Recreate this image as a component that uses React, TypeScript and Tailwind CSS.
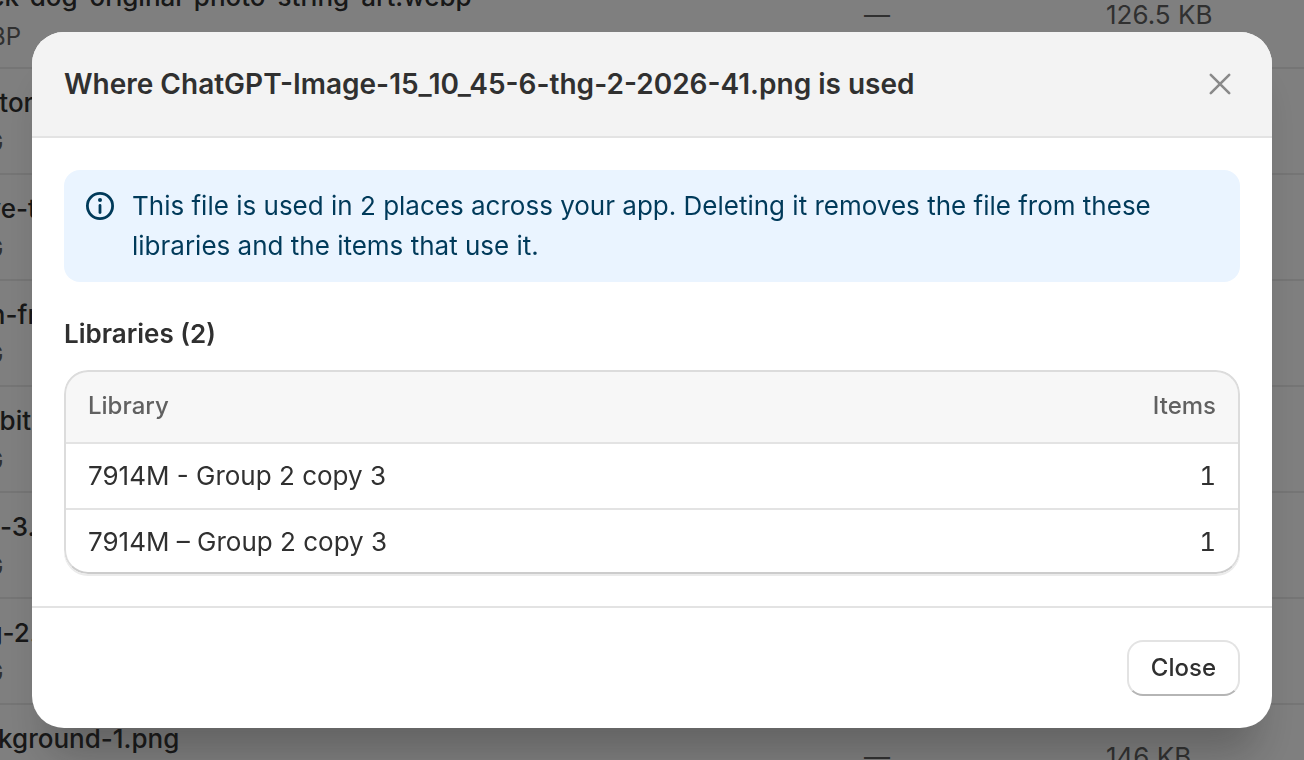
import type { ReactNode } from "react";

type FileRow = {
  name: string;
  type: string;
  size: string;
};

type Library = {
  name: string;
  items: number;
};

const files: FileRow[] = [
  { name: "black-dog-original-photo-string-art.webp", type: "WEBP", size: "126.5 KB" },
  { name: "Vector.png", type: "PNG", size: "98.2 KB" },
  { name: "Cove-template.png", type: "PNG", size: "112 KB" },
  { name: "man-front.png", type: "PNG", size: "87.4 KB" },
  { name: "Rabbit.png", type: "PNG", size: "204 KB" },
  { name: "dog-3.png", type: "PNG", size: "133 KB" },
  { name: "Dog-2.png", type: "PNG", size: "151 KB" },
  { name: "background-1.png", type: "PNG", size: "146 KB" },
];

const libraries: Library[] = [
  { name: "7914M - Group 2 copy 3", items: 1 },
  { name: "7914M – Group 2 copy 3", items: 1 },
];

function InfoIcon() {
  return (
    <svg viewBox="0 0 40 40" className="h-10 w-10 shrink-0" fill="none" aria-hidden="true">
      <circle cx="20" cy="20" r="12.6" stroke="currentColor" strokeWidth="2.8" />
      <path d="M20 19.5v7" stroke="currentColor" strokeWidth="2.8" strokeLinecap="round" />
      <circle cx="20" cy="14" r="2" fill="currentColor" />
    </svg>
  );
}

function CloseIcon() {
  return (
    <svg viewBox="0 0 40 40" className="h-10 w-10" fill="none" aria-hidden="true">
      <path
        d="M10.8 10.8l18.4 18.4M29.2 10.8L10.8 29.2"
        stroke="currentColor"
        strokeWidth="2.6"
        strokeLinecap="round"
      />
    </svg>
  );
}

function FilesTable() {
  return (
    <div className="-mt-[39px] -ml-12">
      <table className="w-full table-fixed text-left text-[26px] leading-10">
        <colgroup>
          <col />
          <col className="w-[242px]" />
          <col className="w-[198px]" />
        </colgroup>
        <tbody>
          {files.map((file) => (
            <tr key={file.name} className="border-t-2 border-[#ebebeb]">
              <td className="pt-3.5 pb-2.5 whitespace-nowrap">
                <div className="font-medium text-[#303030]">{file.name}</div>
                <div className="text-[24px] text-[#616161]">{file.type}</div>
              </td>
              <td className="text-[#616161]">—</td>
              <td className="text-[#616161]">{file.size}</td>
            </tr>
          ))}
        </tbody>
      </table>
    </div>
  );
}

function InfoBanner({ children }: { children: ReactNode }) {
  return (
    <div className="flex items-start gap-3 rounded-2xl bg-[#eaf4ff] p-4 text-[#003a5a]">
      <InfoIcon />
      <p className="text-[26px] leading-10">{children}</p>
    </div>
  );
}

function LibrariesTable() {
  return (
    <div className="relative mt-4 overflow-hidden rounded-3xl shadow-[0_2px_0_#ebebeb] after:pointer-events-none after:absolute after:inset-0 after:rounded-3xl after:border-2 after:border-[#dcdcdc] after:border-b-[#cccccc]">
      <table className="w-full border-separate border-spacing-0 text-[26px] leading-10 text-[#303030]">
        <thead className="bg-[#f7f7f7] text-[24px] text-[#616161]">
          <tr>
            <th scope="col" className="px-6 py-4 text-left font-medium">
              Library
            </th>
            <th scope="col" className="px-6 py-4 text-right font-medium">
              Items
            </th>
          </tr>
        </thead>
        <tbody>
          {libraries.map((library) => (
            <tr key={library.name}>
              <td className="border-t-2 border-[#e3e3e3] px-6 py-3">{library.name}</td>
              <td className="border-t-2 border-[#e3e3e3] px-6 py-3 text-right tabular-nums">
                {library.items}
              </td>
            </tr>
          ))}
        </tbody>
      </table>
    </div>
  );
}

export default function App() {
  return (
    <div className="relative h-screen overflow-hidden bg-white font-['Inter',sans-serif]">
      <FilesTable />

      <div className="fixed inset-0 bg-black/50 p-8">
        <div
          role="dialog"
          aria-modal="true"
          aria-labelledby="usage-title"
          className="overflow-hidden rounded-[32px] bg-white shadow-[0_40px_40px_-16px_rgba(26,26,26,0.28)]"
        >
          <header className="flex items-center justify-between border-b-2 border-[#e3e3e3] bg-[#f3f3f3] p-8">
            <h2 id="usage-title" className="text-[28px] leading-10 font-semibold text-[#303030]">
              Where ChatGPT-Image-15_10_45-6-thg-2-2026-41.png is used
            </h2>
            <button type="button" aria-label="Close dialog" className="text-[#8a8a8a]">
              <CloseIcon />
            </button>
          </header>

          <div className="p-8">
            <InfoBanner>
              This file is used in 2 places across your app. Deleting it removes the file from these
              libraries and the items that use it.
            </InfoBanner>
            <h3 className="mt-8 text-[26px] leading-10 font-semibold text-[#303030]">
              Libraries ({libraries.length})
            </h3>
            <LibrariesTable />
          </div>

          <footer className="flex justify-end border-t-2 border-[#e3e3e3] p-8">
            <button
              type="button"
              className="h-14 rounded-2xl border-2 border-[#e3e3e3] border-b-[#b5b5b5] bg-white px-[22px] text-[24px] leading-10 font-medium text-[#303030]"
            >
              Close
            </button>
          </footer>
        </div>
      </div>
    </div>
  );
}
